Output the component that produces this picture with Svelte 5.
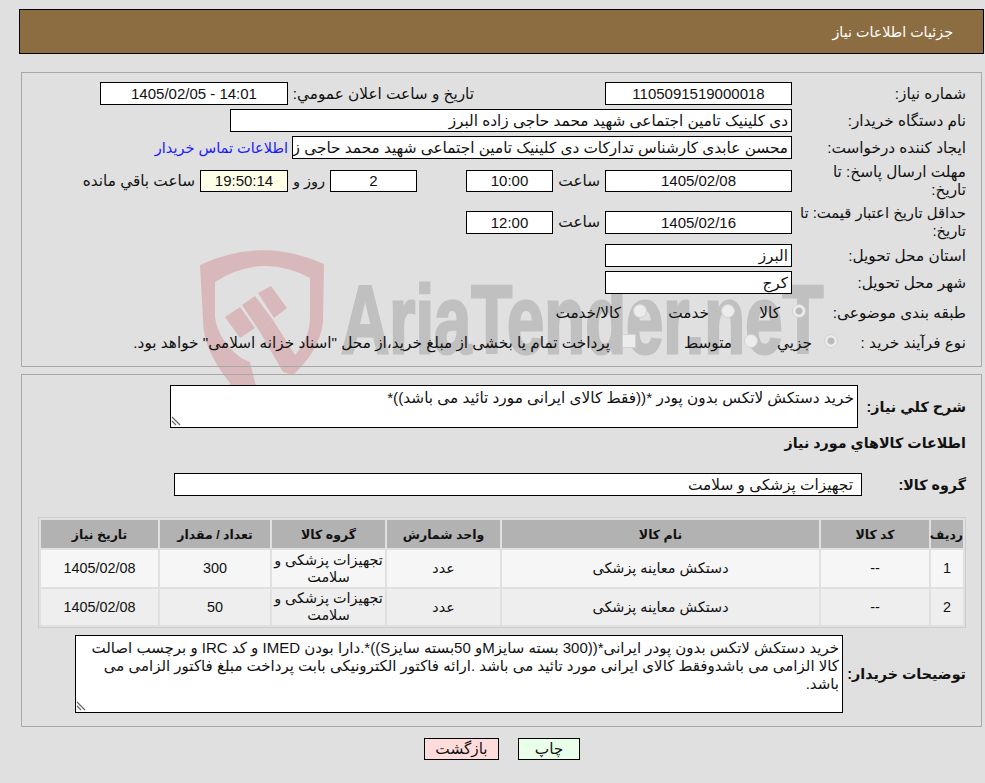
<script>
    const rows = [
        { id: "1", code: "--", name: "دستکش معاینه پزشکی", unit: "عدد", group: "تجهیزات پزشکی و سلامت", qty: "300", date: "1405/02/08" },
        { id: "2", code: "--", name: "دستکش معاینه پزشکی", unit: "عدد", group: "تجهیزات پزشکی و سلامت", qty: "50", date: "1405/02/08" },
    ];
</script>

<div class="page" dir="rtl">
    <!-- watermark sits behind the form, the white boxes cover it -->
    <div class="mark" aria-hidden="true">
        <svg class="shield" width="135" height="145" viewBox="195 245 135 145">
            <path d="M200 265 Q262 236 324 264 L323 322 Q320 350 293 375 L283 372 L260 332 L273 320 L295 355 Q310 338 310 317 L310 278 Q262 252 215 282 L215 317 Q218 340 241 358 L250 362 L257 390 L230 390 L230 383 Q203 350 203 320 Z" fill="#d9b8bb"/>
            <g fill="#d9b8bb">
                <path d="M225 317 L240 307 L255 328 L240 338 Z"/>
                <path d="M242 305 L255 296 L273 320 L260 332 Z"/>
                <path d="M258 293 L271 286 L287 308 L274 318 Z"/>
            </g>
        </svg>
        <span class="mark-text">AriaTender.neT</span>
    </div>

    <header class="banner">جزئیات اطلاعات نیاز</header>

    <section class="panel top">
        <div class="row r1">
            <span class="label">شماره نیاز:</span>
            <span class="box w-date center">1105091519000018</span>
            <span class="mid-label">تاریخ و ساعت اعلان عمومي:</span>
            <span class="box w-pub center" dir="ltr">1405/02/05 - 14:01</span>
        </div>
        <div class="row r1">
            <span class="label">نام دستگاه خریدار:</span>
            <span class="box w-buyer">دی کلینیک تامین اجتماعی شهید محمد حاجی زاده البرز</span>
        </div>
        <div class="row r1">
            <span class="label">ایجاد کننده درخواست:</span>
            <span class="box w-creator clip">محسن عابدی کارشناس تدارکات دی کلینیک تامین اجتماعی شهید محمد حاجی زاده البرز</span>
            <a class="contact" href="#contact">اطلاعات تماس خریدار</a>
        </div>
        <div class="row r2">
            <span class="label">مهلت ارسال پاسخ: تا<br />تاریخ:</span>
            <span class="box w-date center low">1405/02/08</span>
            <span class="hour">ساعت</span>
            <span class="box w-time center low">10:00</span>
            <span class="box w-days center low">2</span>
            <span class="and">روز و</span>
            <span class="box w-left center low">19:50:14</span>
            <span class="remain">ساعت باقي مانده</span>
        </div>
        <div class="row r3">
            <span class="label">حداقل تاریخ اعتبار قیمت: تا<br />تاریخ:</span>
            <span class="box w-date center">1405/02/16</span>
            <span class="hour">ساعت</span>
            <span class="box w-time center">12:00</span>
        </div>
        <div class="row r1">
            <span class="label">استان محل تحویل:</span>
            <span class="box w-date">البرز</span>
        </div>
        <div class="row r1">
            <span class="label">شهر محل تحویل:</span>
            <span class="box w-date">کرج</span>
        </div>
        <div class="row r4">
            <span class="label l-cat">طبقه بندی موضوعی:</span>
            <span class="opt o1"><i class="radio on"></i>کالا</span>
            <span class="opt o2"><i class="radio"></i>خدمت</span>
            <span class="opt"><i class="radio"></i>کالا/خدمت</span>
        </div>
        <div class="row r5">
            <span class="label l-proc">نوع فرآیند خرید :</span>
            <span class="opt o3"><i class="radio on"></i>جزيي</span>
            <span class="opt o4"><i class="radio"></i>متوسط</span>
            <span class="opt"><i class="check"></i>پرداخت تمام یا بخشی از مبلغ خرید،از محل "اسناد خزانه اسلامی" خواهد بود.</span>
        </div>
    </section>

    <section class="panel bottom">
        <div class="row desc">
            <span class="label bold l-desc">شرح کلي نیاز:</span>
            <div class="area area-a">
                خرید دستکش لاتکس بدون پودر *((فقط کالای ایرانی مورد تائید می باشد))*
                <svg class="grip" width="10" height="10" viewBox="0 0 10 10"><path d="M1 1 L9 9 M1 5 L5 9" stroke="#666" stroke-width="1.2" /></svg>
            </div>
        </div>
        <h3 class="goods-title">اطلاعات کالاهاي مورد نیاز</h3>
        <div class="row group">
            <span class="label bold l-group">گروه کالا:</span>
            <span class="box w-group">تجهیزات پزشکی و سلامت</span>
        </div>

        <table>
            <thead>
                <tr>
                    <th class="c-id">ردیف</th>
                    <th class="c-code">کد کالا</th>
                    <th class="c-name">نام کالا</th>
                    <th class="c-unit">واحد شمارش</th>
                    <th class="c-group">گروه کالا</th>
                    <th class="c-qty">تعداد / مقدار</th>
                    <th>تاریخ نیاز</th>
                </tr>
            </thead>
            <tbody>
                {#each rows as row}
                    <tr>
                        <td>{row.id}</td>
                        <td>{row.code}</td>
                        <td>{row.name}</td>
                        <td>{row.unit}</td>
                        <td>{row.group}</td>
                        <td>{row.qty}</td>
                        <td>{row.date}</td>
                    </tr>
                {/each}
            </tbody>
        </table>

        <div class="row notes">
            <span class="label bold l-notes">توضیحات خریدار:</span>
            <div class="area area-b">
                خرید دستکش لاتکس بدون پودر ایرانی*((300 بسته سایزMو 50بسته سایزS))*.دارا بودن IMED و کد IRC و برچسب اصالت کالا الزامی می باشدوفقط کالای ایرانی مورد تائید می باشد .ارائه فاکتور الکترونیکی بابت پرداخت مبلغ فاکتور الزامی می باشد.
                <svg class="grip" width="10" height="10" viewBox="0 0 10 10"><path d="M1 1 L9 9 M1 5 L5 9" stroke="#666" stroke-width="1.2" /></svg>
            </div>
        </div>
    </section>

    <div class="actions">
        <button class="print">چاپ</button>
        <button class="back">بازگشت</button>
    </div>
</div>

<style>
    :global(body) {
        background: #e0e0e0;
        font-family: "Liberation Sans", "DejaVu Sans", sans-serif;
        font-size: 15.3px;
        color: #111;
    }

    .page {
        position: relative;
        width: 985px;
        height: 783px;
        overflow: hidden;
        padding: 9px 0 0 0;
        box-sizing: border-box;
    }

    .banner {
        display: flex;
        align-items: center;
        margin: 0 1px 0 19px;
        height: 45px;
        box-sizing: border-box;
        border: 1px solid #000;
        background: #8c6c41;
        color: #fff;
        padding: 0 30px 0 0;
        font-size: 14.3px;
    }

    .panel {
        position: relative;
        z-index: 1;
        margin: 18px 3px 0 21px;
        border: 1px solid #a8a8a8;
        box-sizing: border-box;
    }

    .top {
        height: 295px;
        padding-top: 9px;
    }

    .bottom {
        height: 353px;
        margin-top: 7px;
        padding-top: 10px;
    }

    .row {
        display: flex;
        align-items: center;
    }

    .r1 {
        height: 23px;
        margin-bottom: 4px;
    }

    .r2 {
        height: 36px;
        margin-bottom: 4px;
    }

    .r3 {
        height: 38px;
        margin-bottom: 3px;
    }

    .r3 .label {
        font-size: 14.8px;
    }

    .r4,
    .r5 {
        height: 30px;
    }

    .label {
        width: 189px;
        flex: none;
        padding-right: 15px;
        box-sizing: border-box;
        line-height: 18px;
        white-space: nowrap;
    }

    .l-cat {
        width: 175px;
    }

    .l-proc {
        width: 143px;
    }

    .l-desc {
        width: 123px;
    }

    .l-group {
        width: 119px;
    }

    .l-notes {
        width: 138px;
    }

    .bold {
        font-weight: bold;
        font-size: 14.3px;
    }

    .box {
        display: block;
        box-sizing: border-box;
        height: 23px;
        line-height: 21px;
        border: 1px solid #000;
        background: #fff;
        padding: 0 3px;
        flex: none;
        white-space: nowrap;
    }

    .low {
        height: 22px;
        line-height: 20px;
    }

    .center {
        text-align: center;
        font-size: 15px;
    }

    .clip {
        overflow: hidden;
    }

    .w-date {
        width: 187px;
    }

    .w-pub {
        width: 188px;
    }

    .w-buyer {
        width: 562px;
    }

    .w-creator {
        width: 500px;
    }

    .w-time {
        width: 87px;
    }

    .w-days {
        width: 87px;
        margin-right: 49px;
    }

    .w-left {
        width: 88px;
        background: #ffffe8;
    }

    .w-group {
        width: 688px;
        padding-right: 8px;
    }

    .mid-label {
        width: 181px;
        margin: 0 131px 0 5px;
        white-space: nowrap;
    }

    .contact {
        color: #1a1aff;
        text-decoration: none;
        margin-right: 4px;
        font-size: 14.5px;
        white-space: nowrap;
    }

    .hour {
        width: 52px;
        padding-right: 5px;
        box-sizing: border-box;
    }

    .and {
        width: 42px;
        padding-right: 5px;
        box-sizing: border-box;
        font-size: 14.5px;
    }

    .remain {
        margin-right: 5px;
        white-space: nowrap;
    }

    .opt {
        display: flex;
        align-items: center;
        gap: 12px;
        white-space: nowrap;
    }

    .o1 {
        width: 71px;
    }

    .o2 {
        width: 88px;
    }

    .o3 {
        width: 80px;
    }

    .o4 {
        width: 122px;
    }

    .radio {
        width: 14px;
        height: 14px;
        margin-top: -4px;
        border: 1px solid #d2d2d2;
        border-radius: 50%;
        background: #ececec;
        box-sizing: border-box;
    }

    .radio.on {
        background: radial-gradient(circle, #bbb 0 3px, #ececec 4px);
    }

    .check {
        width: 14px;
        height: 14px;
        margin-top: -4px;
        border: 1px solid #d2d2d2;
        background: #ececec;
        box-sizing: border-box;
    }

    .area {
        position: relative;
        box-sizing: border-box;
        border: 1px solid #000;
        background: #fff;
        padding: 3px 3px 2px 6px;
        line-height: 18px;
    }

    .grip {
        position: absolute;
        left: 0;
        bottom: 1px;
    }

    .area-a {
        width: 688px;
        height: 43px;
    }

    .desc {
        height: 43px;
    }

    .goods-title {
        margin: 5px 15px 0 0;
        font-size: 14.3px;
        line-height: 20px;
    }

    .group {
        margin-top: 20px;
        height: 23px;
    }

    table {
        width: 928px;
        margin: 21px 15px 0 0;
        border-collapse: separate;
        border-spacing: 2px;
        border: 1px solid #cdcdcd;
        table-layout: fixed;
        font-size: 14.4px;
    }

    th {
        background: #b2b2b2;
        height: 28px;
        padding: 0;
        font-size: 12.5px;
    }

    td {
        text-align: center;
        height: 36px;
        padding: 0;
        line-height: 17px;
        background: #f6f6f6;
    }

    tr:first-child td {
        height: 37px;
    }

    tr:nth-child(2) td {
        background: #eee;
    }

    .c-id {
        width: 32px;
    }

    .c-code {
        width: 108px;
    }

    .c-name {
        width: 317px;
    }

    .c-unit {
        width: 113px;
    }

    .c-group {
        width: 113px;
    }

    .c-qty {
        width: 110px;
    }

    .notes {
        margin-top: 7px;
    }

    .area-b {
        width: 768px;
        height: 78px;
        font-size: 15px;
    }

    .actions {
        display: flex;
        gap: 19px;
        margin: 11px 405px 0 0;
    }

    button {
        font: inherit;
        height: 22px;
        padding: 0;
        border: 1px solid #000;
        color: #111;
    }

    .print {
        width: 62px;
        background: #eaffea;
    }

    .back {
        width: 75px;
        background: #ffdcdc;
    }

    .mark {
        position: absolute;
        left: 195px;
        top: 245px;
        width: 620px;
        height: 145px;
        z-index: 0;
        pointer-events: none;
        direction: ltr;
    }

    .shield {
        display: block;
    }

    .mark-text {
        position: absolute;
        left: 146px;
        top: 19px;
        font-family: "Liberation Sans", sans-serif;
        font-weight: bold;
        font-size: 97px;
        line-height: 111px;
        color: #c0c0c0;
        -webkit-text-stroke: 3px #c0c0c0;
        transform-origin: left center;
        transform: scaleX(0.69);
        white-space: nowrap;
    }
</style>
